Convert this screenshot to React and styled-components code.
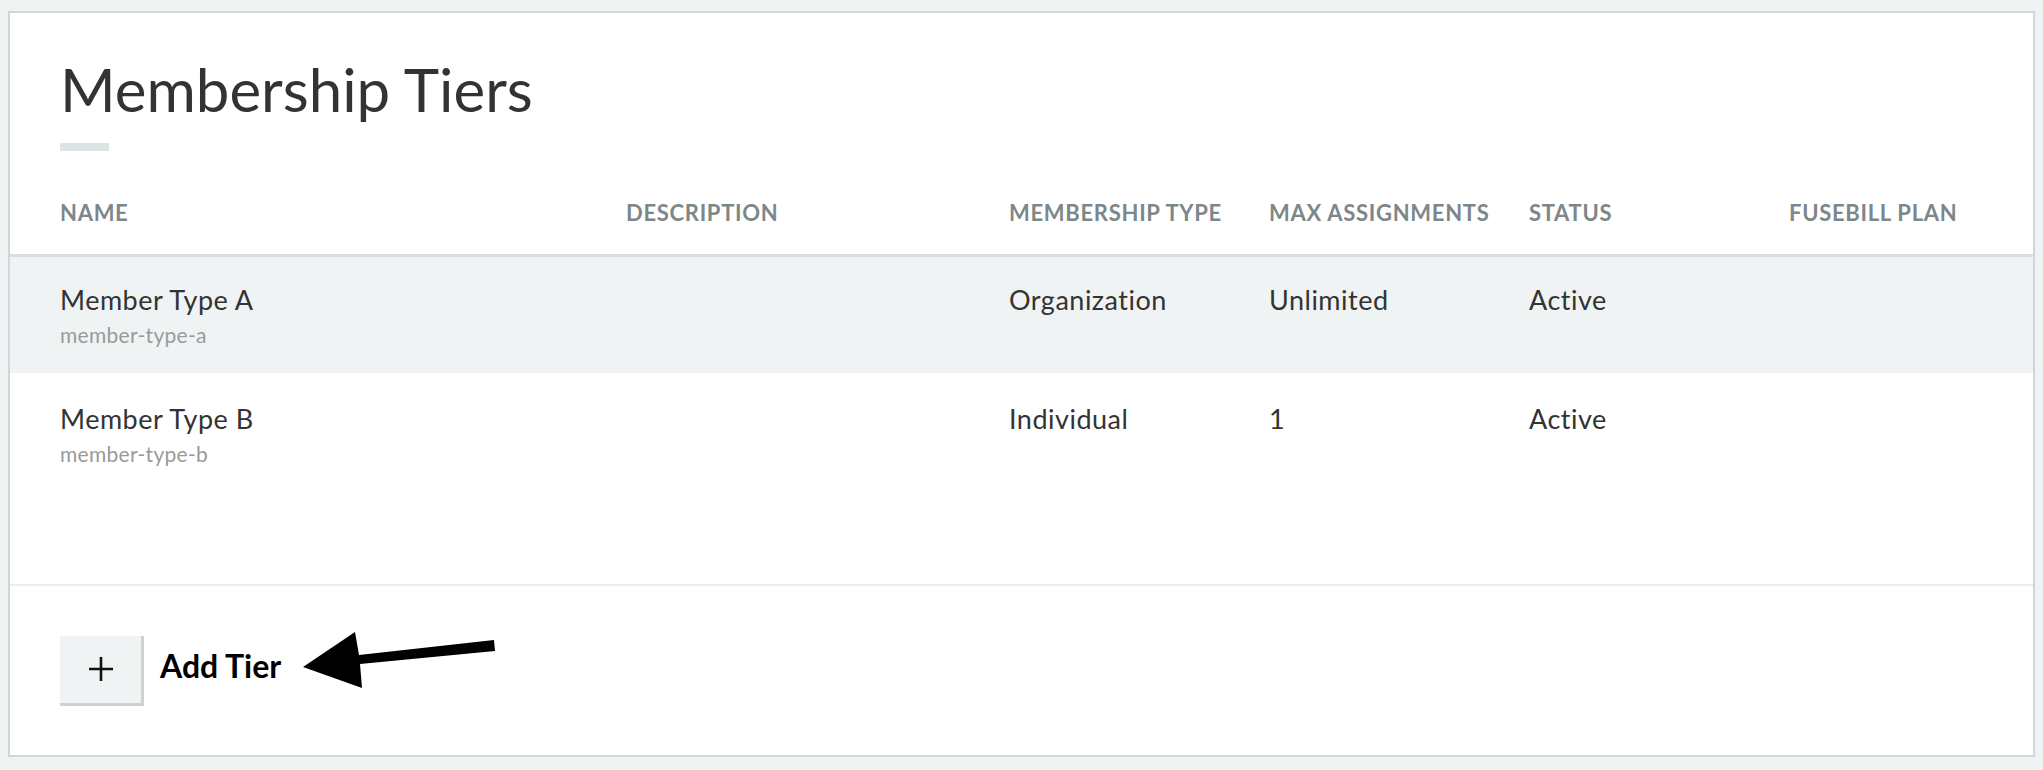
import React from "react";
import styled, { createGlobalStyle } from "styled-components";

const GlobalStyle = createGlobalStyle`
  body {
    margin: 0;
    background: #f0f3f4;
    font-family: Lato, "Open Sans", sans-serif;
    color: #333;
  }
`;

const Page = styled.div`
  padding: 11px 8px 12px 8px;
`;

const Card = styled.div`
  background: #fff;
  border: 2px solid #d3d6d6;
`;

const Header = styled.div`
  padding: 40px 50px 0 50px;
`;

const Title = styled.h1`
  margin: 0;
  font-size: 60px;
  font-weight: 400;
  line-height: 1.22;
  color: #333;
`;

const TitleBar = styled.div`
  width: 49px;
  height: 8px;
  margin-top: 17px;
  background: #dde4e6;
`;

const columns = "566px 383px 260px 260px 260px 1fr";

const HeadRow = styled.div`
  display: grid;
  grid-template-columns: ${columns};
  margin-top: 49px;
  padding: 0 50px 27px 50px;
  border-bottom: 3px solid #dcdfdf;
`;

const HeadCell = styled.div`
  font-size: 22px;
  font-weight: 700;
  letter-spacing: 0.7px;
  line-height: 1.2;
  color: #7d8789;
  text-transform: uppercase;
  white-space: nowrap;
`;

const Body = styled.div`
  min-height: 327px;
  border-bottom: 2px solid #eaeded;
`;

const Row = styled.div`
  display: grid;
  grid-template-columns: ${columns};
  height: 116px;
  box-sizing: border-box;
  padding: ${(p) => (p.$shaded ? "27px" : "30px")} 50px 0 50px;
  background: ${(p) => (p.$shaded ? "#f0f3f4" : "#fff")};
`;

const Cell = styled.div`
  font-size: 27px;
  letter-spacing: 0.5px;
  line-height: 1.2;
  color: #333;
`;

const Slug = styled.div`
  margin-top: 6px;
  font-size: 21px;
  letter-spacing: 0.3px;
  line-height: 1.2;
  color: #9a9a9a;
`;

const Footer = styled.div`
  display: flex;
  align-items: center;
  padding: 50px 50px 49px 50px;
`;

const AddButton = styled.button`
  width: 84px;
  height: 70px;
  box-sizing: border-box;
  padding: 0;
  display: flex;
  align-items: center;
  justify-content: center;
  background: #f0f3f4;
  border: none;
  border-right: 3px solid #cfd1d1;
  border-bottom: 3px solid #cfd1d1;
  cursor: pointer;
`;

const AddLabel = styled.span`
  margin-left: 16px;
  margin-bottom: 8px;
  font-size: 32px;
  font-weight: 700;
  line-height: 1.2;
  color: #000;
`;

const Arrow = styled.svg`
  align-self: flex-start;
  margin-top: -6px;
  margin-left: 21px;
`;

const tiers = [
  {
    name: "Member Type A",
    slug: "member-type-a",
    description: "",
    type: "Organization",
    max: "Unlimited",
    status: "Active",
    plan: "",
  },
  {
    name: "Member Type B",
    slug: "member-type-b",
    description: "",
    type: "Individual",
    max: "1",
    status: "Active",
    plan: "",
  },
];

const headings = [
  "Name",
  "Description",
  "Membership Type",
  "Max Assignments",
  "Status",
  "Fusebill Plan",
];

export default function App() {
  return (
    <React.Fragment>
      <GlobalStyle />
      <Page>
        <Card>
          <Header>
            <Title>Membership Tiers</Title>
            <TitleBar />
          </Header>
          <HeadRow>
            {headings.map((h) => (
              <HeadCell key={h}>{h}</HeadCell>
            ))}
          </HeadRow>
          <Body>
            {tiers.map((tier, i) => (
              <Row key={tier.slug} $shaded={i === 0}>
                <Cell>
                  {tier.name}
                  <Slug>{tier.slug}</Slug>
                </Cell>
                <Cell>{tier.description}</Cell>
                <Cell>{tier.type}</Cell>
                <Cell>{tier.max}</Cell>
                <Cell>{tier.status}</Cell>
                <Cell>{tier.plan}</Cell>
              </Row>
            ))}
          </Body>
          <Footer>
            <AddButton aria-label="Add Tier">
              <svg width="26" height="26" viewBox="0 0 26 26">
                <path d="M13 1v24M1 13h24" stroke="#111" strokeWidth="2.6" />
              </svg>
            </AddButton>
            <AddLabel>Add Tier</AddLabel>
            <Arrow width="195" height="60" viewBox="0 0 195 60">
              <polygon
                points="1,37 53,2 57,25 192,10 193,21 58,34 60,58"
                fill="#000"
              />
            </Arrow>
          </Footer>
        </Card>
      </Page>
    </React.Fragment>
  );
}
